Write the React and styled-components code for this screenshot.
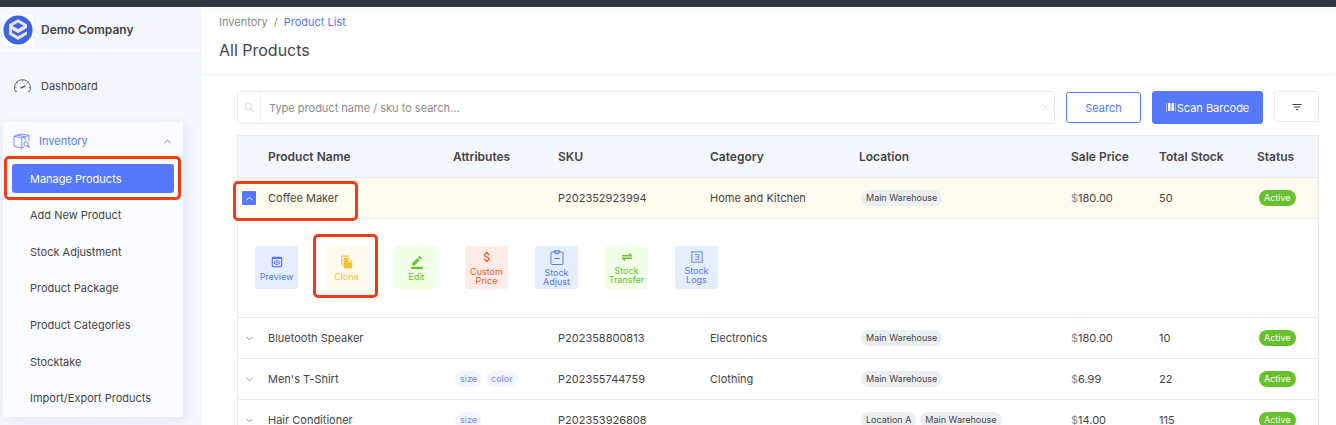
import React from 'react';
import styled, { createGlobalStyle } from 'styled-components';
import { MdSearch, MdFilterList, MdFileCopy, MdOutlinePreview, MdBorderColor, MdAttachMoney } from 'react-icons/md';
import { FiChevronDown, FiChevronUp, FiX } from 'react-icons/fi';

const GlobalStyle = createGlobalStyle`
    * {
        box-sizing: border-box;
    }

    body {
        margin: 0;
        overflow: hidden;
        background: #fff;
        color: #444;
        font-family: Inter, "Liberation Sans", sans-serif;
        font-size: 11px;
        line-height: 16px;
    }

    button, input {
        font: inherit;
    }

    a {
        color: inherit;
        text-decoration: none;
    }

    svg {
        display: block;
        flex: none;
    }
`;

const Page = styled.div`
    height: 100vh;
    overflow: hidden;
    display: flex;
    flex-direction: column;
`;

const TopBar = styled.div`
    flex: none;
    height: 7px;
    background: #2f3541;
`;

const Body = styled.div`
    flex: 1;
    display: flex;
    min-height: 0;
`;

const Sidebar = styled.aside`
    flex: none;
    width: 201px;
    background: #f4f7ff;
`;

const Company = styled.div`
    display: flex;
    align-items: center;
    gap: 8px;
    height: 45px;
    padding-left: 3px;
    font-size: 12px;
    font-weight: 600;
    box-shadow: 0 2px 3px rgba(60, 70, 110, 0.03);
`;

const NavLink = styled.a`
    display: flex;
    align-items: center;
    gap: 9px;
    height: 38px;
    margin: 15px 0 17px;
    padding-left: 13px;
`;

const MenuCard = styled.nav`
    width: 180px;
    margin-left: 3px;
    background: #fbfcff;
    border-radius: 3px;
    box-shadow: 3px 3px 14px rgba(60, 70, 120, 0.1);
`;

const MenuToggle = styled.button`
    display: flex;
    align-items: center;
    gap: 9px;
    width: 100%;
    height: 38px;
    padding: 0 10px;
    border: 0;
    background: none;
    color: #5578ff;

    svg:last-child {
        margin-left: auto;
    }
`;

const MenuList = styled.ul`
    display: grid;
    align-content: space-between;
    height: 257px;
    margin: 0;
    padding: 4px 9px;
    list-style: none;

    li {
        position: relative;
    }
`;

const MenuItem = styled.a`
    display: flex;
    align-items: center;
    height: 29px;
    padding-left: 18px;
    border-radius: 3px;
    background: ${props => props.$active ? '#5578ff' : 'none'};
    color: ${props => props.$active ? '#fff' : '#444'};
`;

// red outline that sits around whatever it is placed in
const Highlight = styled.span`
    position: absolute;
    inset: ${props => props.$inset};
    border: 3px solid #f03d17;
    border-radius: 5px;
    pointer-events: none;
`;

const Main = styled.main`
    flex: 1;
    min-width: 0;
`;

const PageHeader = styled.header`
    height: 66px;
    padding: 7px 18px 0;
    box-shadow: 0 2px 4px rgba(0, 0, 0, 0.04), inset 0 8px 8px -6px rgba(0, 0, 0, 0.04);

    h1 {
        margin: 10px 0 0;
        font-size: 16px;
        font-weight: 400;
        line-height: 20px;
    }
`;

const Breadcrumb = styled.nav`
    display: flex;
    gap: 6px;
    color: #888;

    a:last-child {
        color: #5578ff;
    }
`;

const Content = styled.div`
    padding: 18px 17px 0 36px;
`;

const Toolbar = styled.form`
    display: flex;
    gap: 11px;
    margin-bottom: 11px;
`;

const SearchBox = styled.label`
    flex: 1;
    display: flex;
    align-items: center;
    gap: 3px;
    height: 33px;
    padding: 0 3px 0 5px;
    border: 1px solid #ebebeb;
    border-radius: 3px;
    color: #e2e2e2;

    input {
        flex: 1;
        height: 29px;
        padding: 0 8px;
        border: 0;
        border-left: 1px solid #f1f3fc;
        outline: 0;
        background: none;
        color: #444;
    }

    input::placeholder {
        color: #8c8c8c;
    }
`;

const Button = styled.button`
    display: flex;
    align-items: center;
    justify-content: center;
    gap: 1px;
    width: ${props => props.$width};
    height: ${props => props.$primary ? '33px' : '31px'};
    margin-top: ${props => props.$outline ? '1px' : '0'};
    padding: 0;
    border: 1px solid ${props => props.$primary || props.$outline ? '#5578ff' : '#ebebeb'};
    border-radius: 3px;
    background: ${props => props.$primary ? '#5578ff' : '#fff'};
    color: ${props => props.$primary ? '#fff' : props.$outline ? '#5578ff' : '#444'};
`;

const Table = styled.table`
    width: 100%;
    table-layout: fixed;
    border-collapse: separate;
    border-spacing: 0;
    border: 1px solid #ebebeb;

    th, td {
        height: 41px;
        padding: 0 0 0 8px;
        border-bottom: 1px solid #ebebeb;
        text-align: left;
        white-space: nowrap;
    }

    th {
        height: 42px;
        background: #f4f7ff;
        font-size: 12px;
        font-weight: 600;
    }
`;

const Row = styled.tr`
    background: ${props => props.$open ? '#fffbef' : '#fff'};
`;

const NameCell = styled.td`
    position: relative;
`;

const Expander = styled.button`
    display: flex;
    align-items: center;
    justify-content: center;
    width: 14px;
    height: 14px;
    margin-left: -4px;
    padding: 0;
    border: 0;
    border-radius: 1px;
    background: ${props => props.$open ? '#5578ff' : 'none'};
    color: ${props => props.$open ? '#fff' : '#888'};
`;

const Tags = styled.div`
    display: flex;
    gap: 4px;
    padding-left: 2px;
`;

const colors = {
    attribute: ['#f3f6ff', '#6b88fb'],
    location: ['#ebeff2', '#444'],
    status: ['#67c12d', '#fff'],
};

const Tag = styled.span`
    padding: 0 5px;
    border-radius: 8px;
    background: ${props => colors[props.$kind][0]};
    color: ${props => colors[props.$kind][1]};
    font-size: 9px;
    line-height: 16px;
`;

const Currency = styled.span`
    color: #888;
`;

const Actions = styled.div`
    display: flex;
    gap: 27px;
    height: 98px;
    padding: 27px 9px 0;
`;

const ActionSlot = styled.div`
    position: relative;
    width: 43px;
    height: 43px;
`;

const tones = {
    blue: ['#e5eeff', '#5578ff'],
    yellow: ['#fffaed', '#f7c234'],
    green: ['#f0ffe5', '#67c12d'],
    red: ['#fdece5', '#ee5a29'],
};

const ActionButton = styled.button`
    display: flex;
    flex-direction: column;
    align-items: center;
    justify-content: center;
    gap: 3px;
    width: 43px;
    height: 43px;
    padding: 0;
    border: 0;
    border-radius: 3px;
    background: ${props => tones[props.$tone][0]};
    color: ${props => tones[props.$tone][1]};
    font-size: 9px;
    line-height: 9px;
    white-space: pre-line;
`;

const Logo = () => (
    <svg width="30" height="30" viewBox="0 0 30 30">
        <rect width="30" height="30" fill="#fff" />
        <circle cx="15" cy="15" r="14.6" fill="#3c64e4" />
        <path d="M15 4.2 24 9.2V19.6L15 25 6 19.6V9.2Z" fill="#e4e6e9" />
        <path d="M15 7.6 20.6 10.7 15 14 9.4 10.7Z" fill="#3c64e4" />
        <path d="M9 14.6 15 18.2 24.4 12.8V16L15 21.2 9 17.8Z" fill="#3c64e4" />
    </svg>
);

const Gauge = () => (
    <svg width="19" height="16" viewBox="0 0 19 16" fill="none" stroke="#666">
        <path d="M4 13.4H2.4A8 8 0 1 1 16.6 13.4H15" />
        <path d="M9.5 1.7v2M4 4l1.2 1.2M15 4l-1.2 1.2M1.6 9.4h1.8M17.4 9.4h-1.8" strokeWidth="0.8" />
        <path d="M7.5 10 12.5 8" strokeWidth="1.6" />
    </svg>
);

const BoxIcon = () => (
    <svg width="17" height="16" viewBox="0 0 17 16" fill="none" stroke="#5578ff" strokeWidth="0.8">
        <path d="M1 3.3 8.8 5V15.2L1 13.2ZM1 3.3 8 1 16 2.3 8.8 5M16 2.3V8M4.5 2.2 12 3.8V7M8.8 15.2 11 14.2" />
        <circle cx="13" cy="10.8" r="2.2" />
        <path d="M14.6 12.4 16.4 14.6" strokeWidth="1.2" />
    </svg>
);

const Barcode = () => (
    <svg width="10" height="9" viewBox="0 0 10 9" fill="#fff">
        <path d="M0 0h1v9H0zM9 0h1v9H9z" opacity="0.5" />
        <path d="M2 0h2v8H2zM4.5 0h1v8h-1zM6 0h2v8H6z" />
    </svg>
);

const Clipboard = () => (
    <svg width="14" height="15" viewBox="0 0 14 15" fill="none" stroke="currentColor">
        <rect x="1" y="2" width="12" height="12.5" rx="1" />
        <path d="M4.5 2V.8h5V2l-1 1.8h-3ZM4.5 8.5h5" />
    </svg>
);

const Transfer = () => (
    <svg width="12" height="12" viewBox="0 0 12 12" fill="currentColor">
        <path d="M1 4h7V1.5L11.5 5H1zM11 8H4v2.5L.5 7H11z" />
        <path d="M1 5h10v2H1z" opacity="0.5" />
    </svg>
);

const Logs = () => (
    <svg width="12" height="12" viewBox="0 0 12 12" fill="none" stroke="currentColor">
        <rect x="0.8" y="0.8" width="10.4" height="10.4" strokeWidth="1.5" opacity="0.6" />
        <path d="M4 3.5h3.5v5H4M4.5 6H8" strokeWidth="1.2" opacity="0.7" />
    </svg>
);

const menu = [
    'Manage Products',
    'Add New Product',
    'Stock Adjustment',
    'Product Package',
    'Product Categories',
    'Stocktake',
    'Import/Export Products',
];

const actions = [
    { label: 'Preview', tone: 'blue', icon: <MdOutlinePreview size={14} /> },
    { label: 'Clone', tone: 'yellow', icon: <MdFileCopy size={14} />, marked: true },
    { label: 'Edit', tone: 'green', icon: <MdBorderColor size={14} /> },
    { label: 'Custom\nPrice', tone: 'red', icon: <MdAttachMoney size={14} /> },
    { label: 'Stock\nAdjust', tone: 'blue', icon: <Clipboard /> },
    { label: 'Stock\nTransfer', tone: 'green', icon: <Transfer /> },
    { label: 'Stock\nLogs', tone: 'blue', icon: <Logs /> },
];

const products = [
    { name: 'Coffee Maker', attributes: [], sku: 'P202352923994', category: 'Home and Kitchen', locations: ['Main Warehouse'], price: '180.00', stock: 50, open: true },
    { name: 'Bluetooth Speaker', attributes: [], sku: 'P202358800813', category: 'Electronics', locations: ['Main Warehouse'], price: '180.00', stock: 10 },
    { name: "Men's T-Shirt", attributes: ['size', 'color'], sku: 'P202355744759', category: 'Clothing', locations: ['Main Warehouse'], price: '6.99', stock: 22 },
    { name: 'Hair Conditioner', attributes: ['size'], sku: 'P202353926808', category: '', locations: ['Location A', 'Main Warehouse'], price: '14.00', stock: 115 },
];

const columns = [
    ['', 22],
    ['Product Name', 185],
    ['Attributes', 105],
    ['SKU', 152],
    ['Category', 149],
    ['Location', 212],
    ['Sale Price', 88],
    ['Total Stock', 98],
    ['Status', 69],
];

const ProductRow = ({ product }) => (
    <>
        <Row $open={product.open}>
            <td>
                <Expander $open={product.open} aria-label={`Toggle ${product.name}`}>
                    {product.open ? <FiChevronUp size={11} /> : <FiChevronDown size={11} />}
                </Expander>
            </td>
            <NameCell>
                {product.name}
                {product.open && <Highlight $inset="3px 87px -3px -27px" />}
            </NameCell>
            <td><Tags>{product.attributes.map(a => <Tag key={a} $kind="attribute">{a}</Tag>)}</Tags></td>
            <td>{product.sku}</td>
            <td>{product.category}</td>
            <td><Tags>{product.locations.map(l => <Tag key={l} $kind="location">{l}</Tag>)}</Tags></td>
            <td><Currency>$</Currency>{product.price}</td>
            <td>{product.stock}</td>
            <td><Tags><Tag $kind="status">Active</Tag></Tags></td>
        </Row>
        {product.open && (
            <Row>
                <td colSpan={columns.length}>
                    <Actions>
                        {actions.map(action => (
                            <ActionSlot key={action.label}>
                                <ActionButton $tone={action.tone}>
                                    {action.icon}
                                    {action.label}
                                </ActionButton>
                                {action.marked && <Highlight $inset="-12px -10px -9px -12px" />}
                            </ActionSlot>
                        ))}
                    </Actions>
                </td>
            </Row>
        )}
    </>
);

export default function App() {
    return (
        <Page>
            <GlobalStyle />
            <TopBar />
            <Body>
                <Sidebar>
                    <Company><Logo />Demo Company</Company>
                    <NavLink href="#dashboard"><Gauge />Dashboard</NavLink>
                    <MenuCard>
                        <MenuToggle><BoxIcon />Inventory<FiChevronUp size={11} /></MenuToggle>
                        <MenuList>
                            {menu.map((item, i) => (
                                <li key={item}>
                                    <MenuItem href="#products" $active={i === 0}>{item}</MenuItem>
                                    {i === 0 && <Highlight $inset="-8px -7px -7px -8px" />}
                                </li>
                            ))}
                        </MenuList>
                    </MenuCard>
                </Sidebar>
                <Main>
                    <PageHeader>
                        <Breadcrumb>
                            <a href="#inventory">Inventory</a>
                            <span>/</span>
                            <a href="#products">Product List</a>
                        </Breadcrumb>
                        <h1>All Products</h1>
                    </PageHeader>
                    <Content>
                        <Toolbar onSubmit={e => e.preventDefault()}>
                            <SearchBox>
                                <MdSearch size={14} />
                                <input type="text" aria-label="Search products" placeholder="Type product name / sku to search..." />
                                <FiX size={11} />
                            </SearchBox>
                            <Button $outline $width="75px">Search</Button>
                            <Button type="button" $primary $width="111px"><Barcode />Scan Barcode</Button>
                            <Button type="button" $width="45px" aria-label="Filter"><MdFilterList size={12} /></Button>
                        </Toolbar>
                        <Table>
                            <colgroup>
                                {columns.map(([label, width]) => <col key={label} width={width} />)}
                            </colgroup>
                            <thead>
                                <tr>{columns.map(([label]) => <th key={label}>{label}</th>)}</tr>
                            </thead>
                            <tbody>
                                {products.map(p => <ProductRow key={p.name} product={p} />)}
                            </tbody>
                        </Table>
                    </Content>
                </Main>
            </Body>
        </Page>
    );
}
